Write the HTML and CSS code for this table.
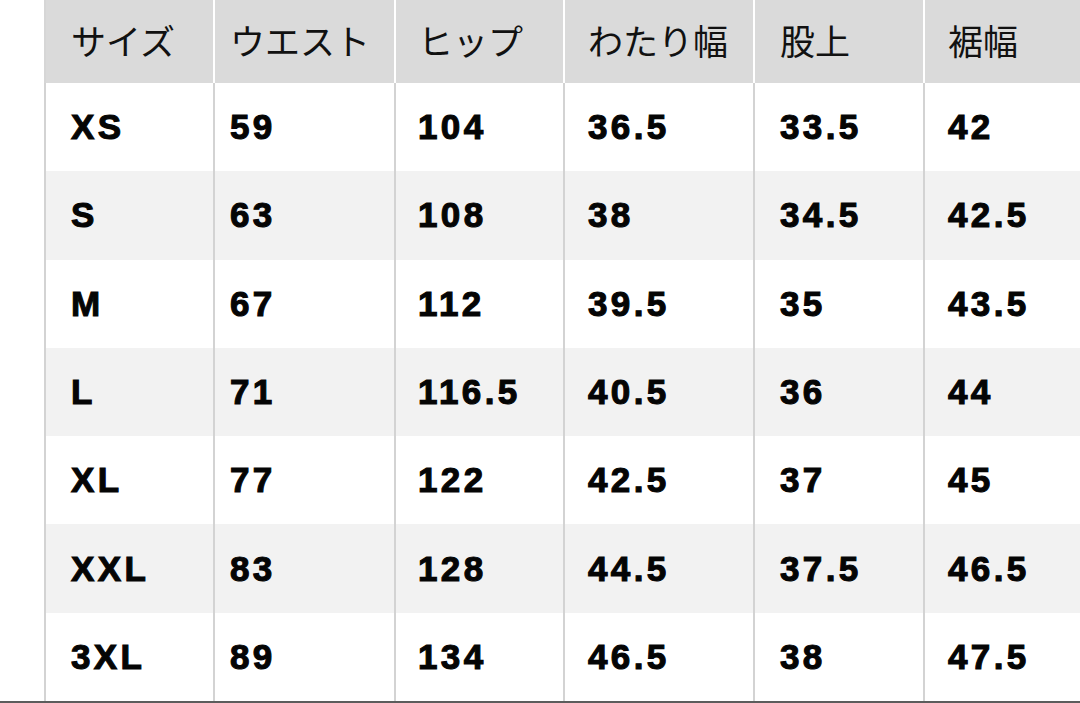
FILE: index.html
```html
<!DOCTYPE html>
<html lang="ja">
<head>
<meta charset="utf-8">
<title>サイズ表</title>
<link rel="stylesheet" href="styles.css">
</head>
<body>
<div class="page">
  <div class="table">
    <div class="row head">
      <div class="cell">サイズ</div>
      <div class="cell">ウエスト</div>
      <div class="cell">ヒップ</div>
      <div class="cell">わたり幅</div>
      <div class="cell">股上</div>
      <div class="cell">裾幅</div>
    </div>
    <div class="row">
      <div class="cell">XS</div><div class="cell">59</div><div class="cell">104</div><div class="cell">36.5</div><div class="cell">33.5</div><div class="cell">42</div>
    </div>
    <div class="row alt">
      <div class="cell">S</div><div class="cell">63</div><div class="cell">108</div><div class="cell">38</div><div class="cell">34.5</div><div class="cell">42.5</div>
    </div>
    <div class="row">
      <div class="cell">M</div><div class="cell">67</div><div class="cell">112</div><div class="cell">39.5</div><div class="cell">35</div><div class="cell">43.5</div>
    </div>
    <div class="row alt">
      <div class="cell">L</div><div class="cell">71</div><div class="cell">116.5</div><div class="cell">40.5</div><div class="cell">36</div><div class="cell">44</div>
    </div>
    <div class="row">
      <div class="cell">XL</div><div class="cell">77</div><div class="cell">122</div><div class="cell">42.5</div><div class="cell">37</div><div class="cell">45</div>
    </div>
    <div class="row alt">
      <div class="cell">XXL</div><div class="cell">83</div><div class="cell">128</div><div class="cell">44.5</div><div class="cell">37.5</div><div class="cell">46.5</div>
    </div>
    <div class="row">
      <div class="cell">3XL</div><div class="cell">89</div><div class="cell">134</div><div class="cell">46.5</div><div class="cell">38</div><div class="cell">47.5</div>
    </div>
  </div>
  <div class="bottom-line"></div>
</div>
</body>
</html>
```
FILE: styles.css
```css
html, body {
  margin: 0;
  padding: 0;
  background: #ffffff;
}
body {
  width: 1080px;
  height: 703px;
  overflow: hidden;
}
.page {
  display: flex;
  flex-direction: column;
  width: 1080px;
  height: 703px;
}
.table {
  display: grid;
  grid-template-rows: 83px repeat(7, 1fr);
  flex: 1;
  margin-left: 44px;
  width: 1060px;
}
.row {
  display: grid;
  grid-template-columns: 169px 181px 169px 190px 170px 181px;
  background: #ffffff;
}
.row.alt {
  background: #f2f2f2;
}
.cell {
  display: flex;
  align-items: center;
  border-left: 2px solid #d3d3d3;
  padding-left: 24px;
  font-family: "Liberation Sans", Arial, sans-serif;
  font-weight: bold;
  font-size: 35px;
  letter-spacing: 3.4px;
  -webkit-text-stroke: 1.1px #050505;
  color: #050505;
  white-space: nowrap;
}
.row > .cell:nth-child(1) { padding-left: 25px; }
.row > .cell:nth-child(2) { padding-left: 15px; }
.row > .cell:nth-child(3) { padding-left: 22px; }
.row > .cell:nth-child(4) { padding-left: 23px; }
.row > .cell:nth-child(5) { padding-left: 25px; }
.row > .cell:nth-child(6) { padding-left: 23px; }
.head {
  background: #dadada;
}
.head .cell {
  font-family: "Noto Sans CJK JP", sans-serif;
  font-weight: 400;
  font-size: 35px;
  letter-spacing: 0;
  -webkit-text-stroke: 0;
  color: #111111;
  border-left-color: #ffffff;
  padding-bottom: 5px;
}
.head .cell:first-child {
  border-left-color: #d6d6d6;
}
.bottom-line {
  height: 2px;
  background: #5c5c5c;
}
```
